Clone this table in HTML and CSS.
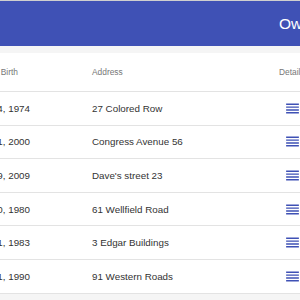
FILE: index.html
```html
<!DOCTYPE html>
<html>
<head>
<meta charset="utf-8">
<link rel="stylesheet" href="styles.css">
</head>
<body>
<div class="topline"></div>
<header class="toolbar"><span class="title">Owners</span></header>
<main class="card">
  <div class="row head">
    <div class="cell date"><span>Date of Birth</span></div>
    <div class="cell">Address</div>
    <div class="cell">Details</div>
  </div>
  <div class="row">
    <div class="cell date"><span>Mar 4, 1974</span></div>
    <div class="cell">27 Colored Row</div>
    <div class="cell"><svg class="icon" viewBox="0 0 24 24"><path d="M3 15h18v-2H3v2zm0 4h18v-2H3v2zm0-8h18V9H3v2zm0-6v2h18V5H3z"/></svg></div>
  </div>
  <div class="row">
    <div class="cell date"><span>Jan 11, 2000</span></div>
    <div class="cell">Congress Avenue 56</div>
    <div class="cell"><svg class="icon" viewBox="0 0 24 24"><path d="M3 15h18v-2H3v2zm0 4h18v-2H3v2zm0-8h18V9H3v2zm0-6v2h18V5H3z"/></svg></div>
  </div>
  <div class="row">
    <div class="cell date"><span>Feb 9, 2009</span></div>
    <div class="cell">Dave's street 23</div>
    <div class="cell"><svg class="icon" viewBox="0 0 24 24"><path d="M3 15h18v-2H3v2zm0 4h18v-2H3v2zm0-8h18V9H3v2zm0-6v2h18V5H3z"/></svg></div>
  </div>
  <div class="row">
    <div class="cell date"><span>Jun 30, 1980</span></div>
    <div class="cell">61 Wellfield Road</div>
    <div class="cell"><svg class="icon" viewBox="0 0 24 24"><path d="M3 15h18v-2H3v2zm0 4h18v-2H3v2zm0-8h18V9H3v2zm0-6v2h18V5H3z"/></svg></div>
  </div>
  <div class="row">
    <div class="cell date"><span>Oct 21, 1983</span></div>
    <div class="cell">3 Edgar Buildings</div>
    <div class="cell"><svg class="icon" viewBox="0 0 24 24"><path d="M3 15h18v-2H3v2zm0 4h18v-2H3v2zm0-8h18V9H3v2zm0-6v2h18V5H3z"/></svg></div>
  </div>
  <div class="row">
    <div class="cell date"><span>Apr 11, 1990</span></div>
    <div class="cell">91 Western Roads</div>
    <div class="cell"><svg class="icon" viewBox="0 0 24 24"><path d="M3 15h18v-2H3v2zm0 4h18v-2H3v2zm0-8h18V9H3v2zm0-6v2h18V5H3z"/></svg></div>
  </div>
</main>
</body>
</html>
```
FILE: styles.css
```css
html, body {
  margin: 0;
  padding: 0;
  overflow: hidden;
  background: #f5f5f5;
  font-family: "Liberation Sans", Arial, sans-serif;
}
.topline {
  height: 1px;
  background: #cfcfcf;
}
.toolbar {
  height: 45px;
  background: #3f51b5;
  display: flex;
  align-items: center;
  padding-left: 279px;
  white-space: nowrap;
}
.title {
  color: #fff;
  font-size: 15.5px;
}
.card {
  margin-top: 7px;
  background: #fff;
}
.row {
  display: grid;
  grid-template-columns: 92px 187px 1fr;
  height: 33.6px;
  align-items: center;
  border-bottom: 1px solid #e3e3e3;
  box-sizing: border-box;
  white-space: nowrap;
  font-size: 9.8px;
  color: #333;
}
.row.head {
  height: 39px;
  font-size: 8.4px;
  color: #777;
}
.date {
  display: flex;
  justify-content: flex-end;
  padding-right: 62px;
  min-width: 0;
}
.date span {
  flex: none;
}
.head .date {
  padding-right: 74px;
}
.icon {
  display: block;
  width: 17px;
  height: 17px;
  margin-left: 5px;
  fill: #3f51b5;
}
```
